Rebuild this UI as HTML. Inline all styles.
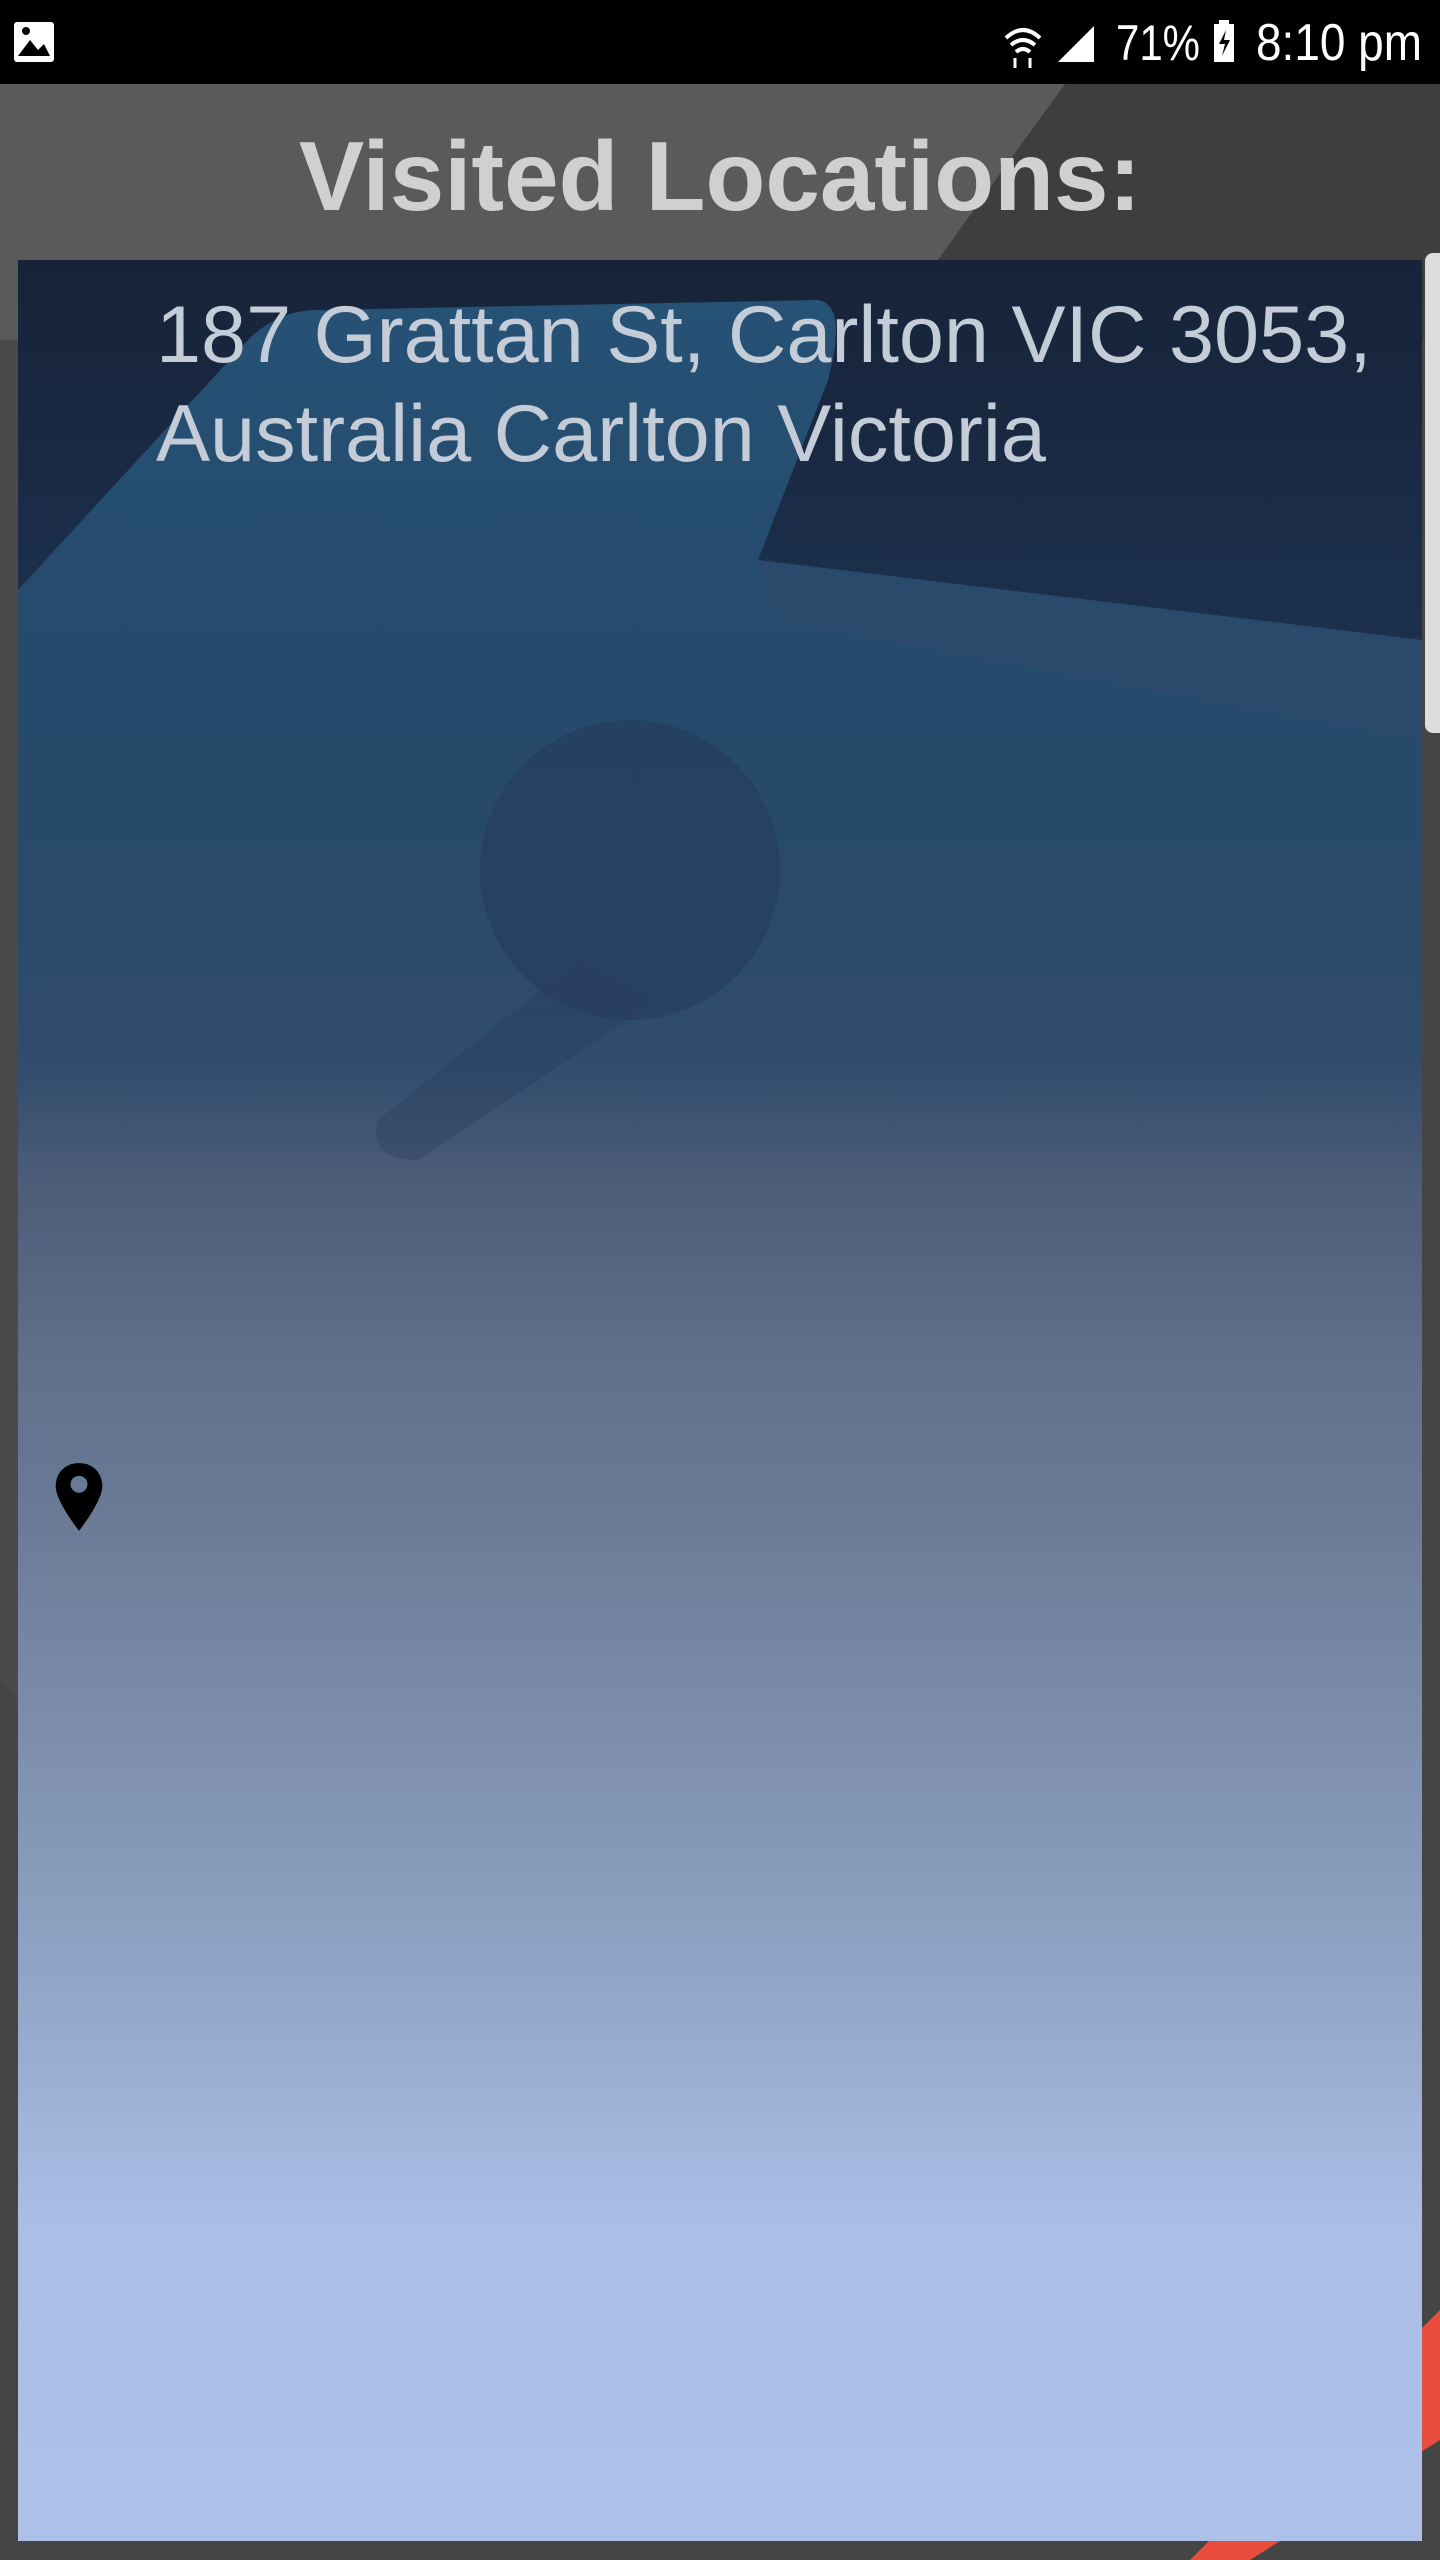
<!DOCTYPE html>
<html><head><meta charset="utf-8"><style>
html,body{margin:0;padding:0;width:1440px;height:2560px;overflow:hidden;background:#444}
body{position:relative;font-family:"Liberation Sans",Roboto,sans-serif}
.bg{position:absolute;left:0;top:0;width:1440px;height:2560px}
.status{position:absolute;left:0;top:0;width:1440px;height:84px;background:#000;color:#fff}
.title{position:absolute;left:0;top:111px;width:1440px;text-align:center;font-weight:bold;font-size:98px;color:#d0d0d0;line-height:130px}
.card{position:absolute;left:18px;top:260px;width:1404px;height:2281px;overflow:hidden;background:linear-gradient(#172338 0px,#1c3150 400px,#334a6a 800px,#55627c 920px,#6a7a96 1250px,#90a3c4 1700px,#abbee6 1970px,#adc0e8 2281px)}
.addr{position:absolute;left:156px;top:286px;font-size:81px;line-height:99px;color:#c4ccd8;white-space:nowrap}
.scroll{position:absolute;left:1425px;top:253px;width:15px;height:480px;background:#ddd;border-radius:8px 0 0 8px}
</style></head><body>
<svg class="bg" viewBox="0 0 1440 2560">
<rect width="1440" height="2560" fill="#454545"/>
<polygon points="0,84 1065,84 880,340 0,340" fill="#5a5a5a"/>
<polygon points="1065,84 1440,84 1440,340 880,340" fill="#3e3e3e"/>
<polygon points="0,340 18,340 18,1700 0,1680" fill="#4a4a4a"/>
<polygon points="1440,2310 1440,2440 1250,2560 1190,2560" fill="#e74c3c"/>
</svg>
<div class="status">
<svg width="1440" height="84">
<rect x="14" y="22" width="40" height="40" rx="3" fill="#fff"/>
<path d="M18 56 L30 40 L38 50 L44 44 L50 56 Z" fill="#000"/><circle cx="26" cy="31" r="4" fill="#000"/>
<path d="M1006 38 q17-16 34 0 M1011 45 q12-10 24 0 M1016 52 q7-6 14 0" stroke="#fff" stroke-width="4" fill="none"/>
<path d="M1015 58 v10 M1030 58 v10" stroke="#fff" stroke-width="3"/>
<path d="M1058 62 L1094 26 L1094 62 Z" fill="#fff"/>
<text x="1116" y="60" font-size="50" fill="#fff" textLength="84" lengthAdjust="spacingAndGlyphs">71%</text>
<rect x="1214" y="24" width="20" height="38" fill="#fff"/><rect x="1219" y="20" width="10" height="5" fill="#fff"/>
<path d="M1226 30 l-7 14 h6 l-3 12 l8 -16 h-6 z" fill="#000"/>
<text x="1256" y="60" font-size="52" fill="#fff" textLength="166" lengthAdjust="spacingAndGlyphs">8:10 pm</text>
</svg>
</div>
<div class="title">Visited Locations:</div>
<div class="card">
<svg width="1404" height="1200" style="position:absolute;left:0;top:0">
<defs><linearGradient id="b" x1="0" y1="0" x2="0" y2="1"><stop offset="0" stop-color="#285a80" stop-opacity=".85"/><stop offset=".6" stop-color="#2a5070" stop-opacity=".6"/><stop offset="1" stop-color="#3a4f6e" stop-opacity="0"/></linearGradient></defs>
<path d="M0 330 L230 80 Q260 50 300 50 L800 40 Q830 45 810 120 L740 300 L1404 380 L1404 1100 L0 1100 Z" fill="url(#b)"/>
<path d="M740 300 L1404 380 L1404 480 L760 360 Z" fill="#2f4a6a" opacity=".6"/>
<circle cx="612" cy="610" r="150" fill="#24385a" opacity=".5"/>
<path d="M560 700 L360 860 Q350 900 400 900 L640 740 Z" fill="#283c5c" opacity=".35"/>
</svg>
<svg width="52" height="72" style="position:absolute;left:35px;top:1201px" viewBox="0 0 24 34">
<path d="M12 1 C5 1 1 6 1 12 C1 19 12 33 12 33 C12 33 23 19 23 12 C23 6 19 1 12 1 Z" fill="#000"/>
<circle cx="12" cy="11" r="4" fill="#6a7a96"/>
</svg>
</div>
<div class="addr">187 Grattan St, Carlton VIC 3053,<br>Australia Carlton Victoria</div>
<div class="scroll"></div>
</body></html>
